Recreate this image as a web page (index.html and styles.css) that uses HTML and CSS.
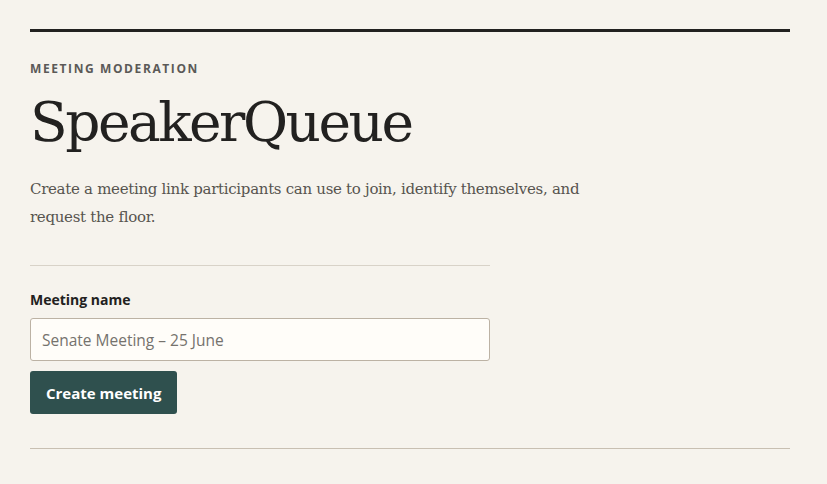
FILE: index.html
```html
<!DOCTYPE html>
<html lang="en">
<head>
    <meta charset="UTF-8">
    <meta name="viewport" content="width=device-width, initial-scale=1.0">
    <title>SpeakerQueue</title>
    <link rel="stylesheet" href="styles.css">
</head>
<body>
    <div class="page">
        <header class="masthead">
            <p class="eyebrow">Meeting moderation</p>
            <h1>SpeakerQueue</h1>
            <p class="lede">Create a meeting link participants can use to join, identify themselves, and request the floor.</p>
        </header>

        <form class="create-form" onsubmit="return false;">
            <label for="meeting-name">Meeting name</label>
            <input type="text" id="meeting-name" placeholder="Senate Meeting – 25 June">
            <button type="submit" class="button">Create meeting</button>
        </form>

        <hr class="rule">
    </div>
</body>
</html>
```

FILE: styles.css
```css
:root {
    --paper: #f6f3ed;
    --ink: #222120;
    --muted: #57544f;
    --line: #d8d2c8;
    --accent: #2f504e;
}

body {
    margin: 0;
    background-color: var(--paper);
    color: var(--ink);
    font-family: "Open Sans", Arial, sans-serif;
}

.page {
    max-width: 760px;
    margin: 29px 30px 0;
    border-top: 3px solid var(--ink);
}

.eyebrow {
    margin: 28px 0 0;
    font-size: 12px;
    font-weight: 700;
    letter-spacing: 1.6px;
    text-transform: uppercase;
    color: #5b5957;
}

h1 {
    margin: 12px 0 0;
    font-family: "DejaVu Serif", Georgia, serif;
    font-weight: 400;
    font-size: 55px;
    line-height: 1.2;
    letter-spacing: -2.5px;
}

.lede {
    max-width: 580px;
    margin: 20px 0 0;
    font-family: "DejaVu Serif", Georgia, serif;
    font-size: 15px;
    line-height: 28px;
    letter-spacing: -0.3px;
    color: var(--muted);
}

.create-form {
    width: 460px;
    margin-top: 34px;
    padding-top: 24px;
    border-top: 1px solid var(--line);
    display: flex;
    flex-direction: column;
    align-items: flex-start;
}

.create-form label {
    font-size: 14px;
    font-weight: 700;
}

.create-form input {
    box-sizing: border-box;
    width: 100%;
    height: 43px;
    margin-top: 9px;
    padding: 0 11px;
    border: 1px solid #bcb2a4;
    border-radius: 3px;
    background-color: #fffdf9;
    font-family: inherit;
    font-size: 15.5px;
    color: var(--ink);
}

.create-form input::placeholder {
    color: #75726d;
}

.button {
    height: 43px;
    margin-top: 10px;
    padding: 0 16px;
    border: none;
    border-radius: 3px;
    background-color: var(--accent);
    color: #fff;
    font-family: inherit;
    font-size: 15px;
    font-weight: 700;
    cursor: pointer;
}

.rule {
    margin: 34px 0 0;
    border: none;
    border-top: 1px solid #c8bfb2;
}
```
